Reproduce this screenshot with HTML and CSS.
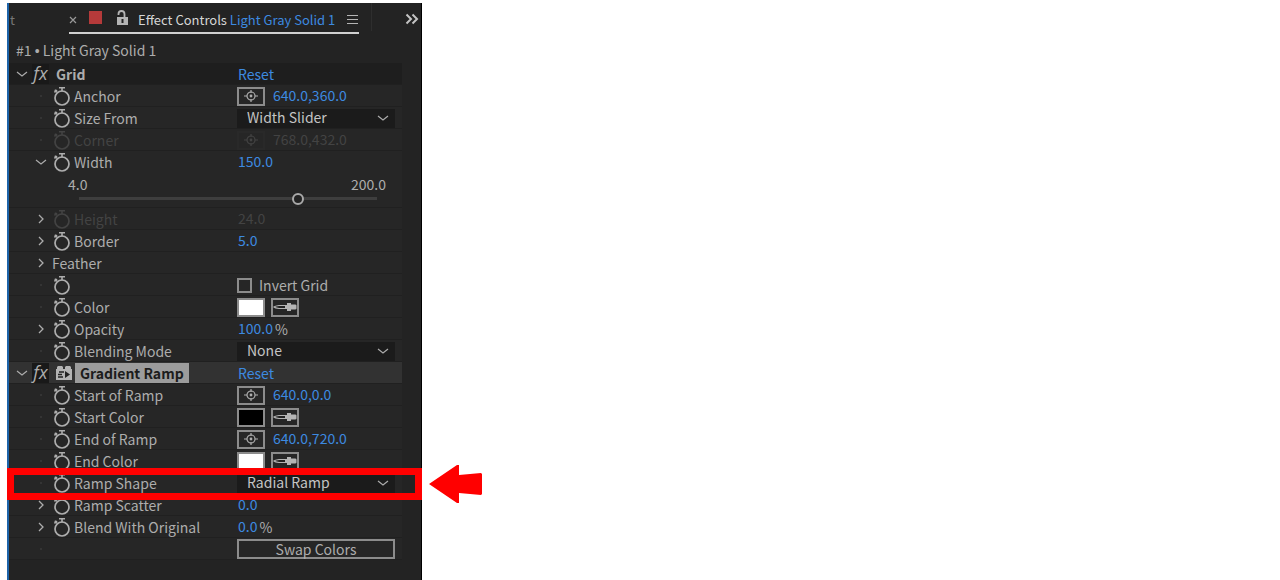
FILE: index.html
```
<!DOCTYPE html>
<html lang="en">
<head>
<meta charset="UTF-8">
<meta name="viewport" content="width=device-width, initial-scale=1.0">
<title>Effect Controls</title>
<link rel="stylesheet" href="styles.css">
</head>
<body>

<!-- shared icons -->
<svg class="sprite" aria-hidden="true">
  <symbol id="watch" viewBox="0 0 18 20">
    <circle cx="9" cy="12" r="7" fill="none" stroke="currentColor" stroke-width="1.7"/>
    <path d="M6 1.8h6M9 2v3.5M1.800 3.800l2.400 2.400M1.400 6.400l2.600-2.200" fill="none" stroke="currentColor" stroke-width="1.6"/>
  </symbol>
  <symbol id="down" viewBox="0 0 12 12">
    <path d="M1 4l5 4 5-4" fill="none" stroke="currentColor" stroke-width="1.2"/>
  </symbol>
  <symbol id="right" viewBox="0 0 12 12">
    <path d="M4 2l4 4-4 4" fill="none" stroke="currentColor" stroke-width="1.3"/>
  </symbol>
  <symbol id="target" viewBox="0 0 16 14">
    <circle cx="8" cy="7" r="4" fill="none" stroke="currentColor" stroke-width="1.2"/>
    <circle cx="8" cy="7" r="1.4" fill="currentColor"/>
    <path d="M1 7h3M12 7h3M8 1v3M8 10v3" stroke="currentColor" stroke-width="1.2"/>
  </symbol>
  <symbol id="dropper" viewBox="0 0 24 10">
    <path d="M14 3.500H6Q2 4 1 5q1 1 5 1.500h8" fill="#222" stroke="#b4b4b4" stroke-width="1.200"/>
    <path d="M12 3.500h2V1h4v1.500h4q1.500 0 1.500 1v3q0 1-1.500 1h-4V9h-4V6.500h-2z" fill="#b4b4b4"/>
  </symbol>
</svg>

<main class="panel">
  <div class="tabs">
    <span class="tab-prev">t</span>
    <div class="tab">
      <button class="icon-btn close" aria-label="Close tab">
        <svg width="8" height="8" viewBox="0 0 8 8"><path d="M1 1l6 6M7 1L1 7" stroke="#999" stroke-width="1.200"/></svg>
      </button>
      <span class="label-color"></span>
      <button class="icon-btn" aria-label="Lock">
        <svg width="14" height="16" viewBox="0 0 14 16"><path d="M3.500 5V4a3 3 0 0 1 6 0v4" fill="none" stroke="#b4b4b4" stroke-width="1.800"/><path d="M2 7h11v8H2z" fill="#b4b4b4"/><path d="M6.500 9h2v4h-2z" fill="#222"/></svg>
      </button>
      <span class="tab-title">Effect Controls <span class="blue">Light Gray Solid 1</span></span>
      <button class="icon-btn menu" aria-label="Panel menu">
        <svg width="12" height="12" viewBox="0 0 12 12"><path d="M0 1.500h11M0 5.500h11M0 9.500h11" stroke="#b4b4b4" stroke-width="1.200"/></svg>
      </button>
    </div>
    <div class="divider"></div>
    <button class="icon-btn more" aria-label="More tabs">
      <svg width="14" height="12" viewBox="0 0 14 12"><path d="M1.500 1.500L6 6l-4.500 4.500M7.500 1.500L12 6l-4.500 4.500" fill="none" stroke="#c4c4c4" stroke-width="2"/></svg>
    </button>
  </div>

  <div class="source">#1 <span class="bullet">•</span> Light Gray Solid 1</div>

  <section class="effect">
    <div class="row head">
      <div class="name">
        <svg class="twist"><use href="#down"/></svg>
        <span class="fx">fx</span>
        <h2>Grid</h2>
      </div>
      <div class="value"><button class="link">Reset</button></div>
    </div>
    <div class="row">
      <div class="name prop"><span class="dot"></span><svg class="watch"><use href="#watch"/></svg>Anchor</div>
      <div class="value"><button class="box-btn" aria-label="Pick anchor"><svg width="16" height="14"><use href="#target"/></svg></button><span class="num">640.0,360.0</span></div>
    </div>
    <div class="row">
      <div class="name prop"><span class="dot"></span><svg class="watch"><use href="#watch"/></svg><label for="size">Size From</label></div>
      <div class="value"><div class="drop"><select id="size"><option>Width Slider</option></select><svg class="arrow"><use href="#down"/></svg></div></div>
    </div>
    <div class="row off">
      <div class="name prop"><span class="dot"></span><svg class="watch"><use href="#watch"/></svg>Corner</div>
      <div class="value"><button class="box-btn" disabled aria-label="Pick corner"><svg width="16" height="14"><use href="#target"/></svg></button><span class="num">768.0,432.0</span></div>
    </div>
    <div class="row open">
      <div class="name prop"><svg class="twist"><use href="#down"/></svg><svg class="watch"><use href="#watch"/></svg><label for="width">Width</label></div>
      <div class="value"><span class="num">150.0</span></div>
      <div class="slider">
        <div class="range"><span>4.0</span><span>200.0</span></div>
        <input type="range" id="width" min="4" max="200" value="150">
      </div>
    </div>
    <div class="row off">
      <div class="name prop"><svg class="twist"><use href="#right"/></svg><svg class="watch"><use href="#watch"/></svg>Height</div>
      <div class="value"><span class="num">24.0</span></div>
    </div>
    <div class="row">
      <div class="name prop"><svg class="twist"><use href="#right"/></svg><svg class="watch"><use href="#watch"/></svg>Border</div>
      <div class="value"><span class="num">5.0</span></div>
    </div>
    <div class="row">
      <div class="name prop"><svg class="twist"><use href="#right"/></svg>Feather</div>
    </div>
    <div class="row">
      <div class="name prop"><span class="dot"></span><svg class="watch"><use href="#watch"/></svg></div>
      <div class="value"><input type="checkbox" id="invert"><label class="check-label" for="invert">Invert Grid</label></div>
    </div>
    <div class="row">
      <div class="name prop"><span class="dot"></span><svg class="watch"><use href="#watch"/></svg><label for="color">Color</label></div>
      <div class="value"><input type="color" id="color" value="#ffffff"><button class="box-btn" aria-label="Eyedropper"><svg width="24" height="10"><use href="#dropper"/></svg></button></div>
    </div>
    <div class="row">
      <div class="name prop"><svg class="twist"><use href="#right"/></svg><svg class="watch"><use href="#watch"/></svg>Opacity</div>
      <div class="value"><span class="num">100.0</span><span class="unit">%</span></div>
    </div>
    <div class="row">
      <div class="name prop"><span class="dot"></span><svg class="watch"><use href="#watch"/></svg><label for="blend">Blending Mode</label></div>
      <div class="value"><div class="drop"><select id="blend"><option>None</option></select><svg class="arrow"><use href="#down"/></svg></div></div>
    </div>
  </section>

  <section class="effect">
    <div class="row head selected">
      <div class="name">
        <svg class="twist"><use href="#down"/></svg>
        <span class="fx">fx</span>
        <svg class="plug" width="16" height="16" viewBox="0 0 16 16"><path d="M0 4h1V2l1-1h4l1 1v2h2V2l1-1h4l1 1v2h1v11H0z" fill="#b4b4b4"/><path d="M3 7h5M2 9.500h4M2 12h5" stroke="#222" stroke-width="1.300"/><path d="M9 6l5 3.500L9 13z" fill="#222"/></svg>
        <h2>Gradient Ramp</h2>
      </div>
      <div class="value"><button class="link">Reset</button></div>
    </div>
    <div class="row">
      <div class="name prop"><span class="dot"></span><svg class="watch"><use href="#watch"/></svg>Start of Ramp</div>
      <div class="value"><button class="box-btn" aria-label="Pick start"><svg width="16" height="14"><use href="#target"/></svg></button><span class="num">640.0,0.0</span></div>
    </div>
    <div class="row">
      <div class="name prop"><span class="dot"></span><svg class="watch"><use href="#watch"/></svg><label for="start">Start Color</label></div>
      <div class="value"><input type="color" id="start" value="#000000"><button class="box-btn" aria-label="Eyedropper"><svg width="24" height="10"><use href="#dropper"/></svg></button></div>
    </div>
    <div class="row">
      <div class="name prop"><span class="dot"></span><svg class="watch"><use href="#watch"/></svg>End of Ramp</div>
      <div class="value"><button class="box-btn" aria-label="Pick end"><svg width="16" height="14"><use href="#target"/></svg></button><span class="num">640.0,720.0</span></div>
    </div>
    <div class="row">
      <div class="name prop"><span class="dot"></span><svg class="watch"><use href="#watch"/></svg><label for="end">End Color</label></div>
      <div class="value"><input type="color" id="end" value="#ffffff"><button class="box-btn" aria-label="Eyedropper"><svg width="24" height="10"><use href="#dropper"/></svg></button></div>
    </div>
    <div class="row">
      <div class="name prop"><span class="dot"></span><svg class="watch"><use href="#watch"/></svg><label for="shape">Ramp Shape</label></div>
      <div class="value"><div class="drop"><select id="shape"><option>Radial Ramp</option></select><svg class="arrow"><use href="#down"/></svg></div></div>
      <div class="marker"></div>
      <svg class="pointer" width="54" height="38" viewBox="0 0 54 38"><path d="M0 19L28 0h2v10l22-2 1 1v20l-1 1-22-2v10h-2z" fill="#f00"/></svg>
    </div>
    <div class="row">
      <div class="name prop"><svg class="twist"><use href="#right"/></svg><svg class="watch"><use href="#watch"/></svg>Ramp Scatter</div>
      <div class="value"><span class="num">0.0</span></div>
    </div>
    <div class="row">
      <div class="name prop"><svg class="twist"><use href="#right"/></svg><svg class="watch"><use href="#watch"/></svg>Blend With Original</div>
      <div class="value"><span class="num">0.0</span><span class="unit">%</span></div>
    </div>
    <div class="row">
      <div class="name prop"><span class="dot"></span></div>
      <div class="value"><button class="swap">Swap Colors</button></div>
    </div>
  </section>
</main>

</body>
</html>
```
FILE: styles.css
```
* {
  box-sizing: border-box;
}
body {
  margin: 0;
  padding: 3px 7px 0;
  min-height: 100vh;
  display: flex;
  background-color: white;
  font-family: "Noto Sans CJK SC", "Open Sans", sans-serif;
  font-size: 14px;
  line-height: 20px;
  color: #adadad;
}
button, select, input {
  font: inherit;
  color: inherit;
  margin: 0;
  padding: 0;
  border: none;
  background: none;
}
.sprite {
  position: absolute;
  width: 0;
  height: 0;
}
svg {
  flex: none;
}
.panel {
  width: 415px;
  background-color: #232323;
  border-left: 2px solid #1d63a8;
  border-right: 1px solid black;
}

/* Tab bar */
.tabs {
  display: flex;
  height: 36px;
  font-size: 13px;
}
.tab-prev {
  width: 60px;
  padding: 7px 1px;
  color: #777;
}
.tab {
  display: flex;
  align-items: center;
  width: 290px;
  height: 31px;
  border-bottom: 2px solid #d0d0d0;
}
.close {
  padding-top: 4px;
  margin-right: 12px;
}
.label-color {
  width: 13px;
  height: 13px;
  margin-right: 13px;
  background-color: #b53a3a;
}
.icon-btn {
  display: flex;
}
.tab-title {
  margin-left: 9px;
  padding-top: 4px;
  color: #d6d6d6;
  white-space: nowrap;
}
.blue {
  color: #3d8ae0;
}
.menu {
  margin-left: auto;
  padding-top: 4px;
}
.divider {
  width: 1px;
  height: 28px;
  margin-left: 12px;
  background-color: #2e2e2e;
}
.more {
  margin-left: auto;
  padding: 10px 2px;
  height: 32px;
}
.source {
  height: 24px;
  padding: 1px 7px;
}
.bullet {
  font-family: "Liberation Sans", sans-serif;
}

/* Effect rows */
.row {
  position: relative;
  display: grid;
  grid-template-columns: 228px 158px;
  height: 22px;
  width: 393px;
  background-color: #262626;
  border-bottom: 1px solid #202020;
}
.name, .value {
  display: flex;
  align-items: center;
  height: 22px;
  white-space: nowrap;
}
.head {
  background-color: #1e1e1e;
}
.selected {
  background-color: #323232;
}
.head .name {
  padding-left: 7px;
}
h2 {
  margin: 0 0 0 7px;
  font-size: 14px;
  line-height: 20px;
}
.selected h2 {
  margin-left: 3px;
  padding: 0 5px;
  background-color: #9c9c9c;
  color: #1c1c1c;
}
.twist {
  width: 12px;
  height: 12px;
}
.fx {
  width: 17px;
  height: 20px;
  margin-left: 4px;
  background-color: #191919;
  font-family: "Open Sans", sans-serif;
  font-style: italic;
  font-size: 18px;
  line-height: 18px;
  text-align: center;
}
.plug {
  margin-left: 7px;
}
.prop {
  padding-left: 26px;
}
.dot {
  width: 2px;
  height: 2px;
  margin: 0 5px;
  background-color: #343434;
}
.prop .twist {
  margin-right: 5px;
}
.prop .watch {
  width: 18px;
  height: 20px;
  margin-right: 3px;
}
.dot + .watch {
  margin-left: 6px;
}
.twist + .watch {
  margin-left: 1px;
}
.off {
  color: #434343;
}
.off .twist {
  color: #a9a9a9;
}

/* Values */
.link, .num {
  color: #3d8ae0;
}
.num {
  padding-bottom: 2px;
}
.off .num {
  color: #434343;
}
.link, .value > .num:first-child {
  margin-left: 1px;
}
.box-btn {
  display: flex;
  align-items: center;
  justify-content: center;
  width: 28px;
  height: 19px;
  margin-right: 8px;
  border: 2px solid #8c8c8c;
}
.off .box-btn {
  border-color: #292929;
}
input[type="color"] {
  appearance: none;
  width: 28px;
  height: 19px;
  margin-right: 6px;
  border: 2px solid #8c8c8c;
}
input::-webkit-color-swatch-wrapper {
  padding: 0;
}
input::-webkit-color-swatch {
  border: none;
  border-radius: 0;
}
input[type="checkbox"] {
  appearance: none;
  width: 15px;
  height: 15px;
  border: 2px solid #8c8c8c;
}
.check-label {
  margin-left: 7px;
}
.unit {
  margin-left: 2px;
}
.drop {
  position: relative;
  width: 100%;
}
.drop select {
  appearance: none;
  display: block;
  width: 100%;
  height: 19px;
  padding: 0 0 2px 10px;
  line-height: 17px;
  background-color: #1b1b1b;
  color: #c4c4c4;
}
.arrow {
  position: absolute;
  top: 3px;
  right: 6px;
  width: 12px;
  height: 12px;
}
.swap {
  width: 100%;
  height: 20px;
  line-height: 16px;
  border: 2px solid #8c8c8c;
}

/* Width slider */
.open {
  height: 57px;
}
.slider {
  grid-column: 1 / 3;
}
.range {
  display: flex;
  justify-content: space-between;
  padding: 0 9px 0 59px;
  line-height: 17px;
}
input[type="range"] {
  appearance: none;
  display: block;
  width: 298px;
  height: 12px;
  margin-left: 70px;
}
input::-webkit-slider-runnable-track {
  height: 3px;
  background-color: #3e3e3e;
}
input::-webkit-slider-thumb {
  appearance: none;
  width: 12px;
  height: 12px;
  margin-top: -4px;
  border: 2px solid #a9a9a9;
  border-radius: 50%;
  background-color: #232323;
}

/* Red callout over the ramp shape row */
.marker {
  position: absolute;
  top: -4px;
  left: -2px;
  width: 415px;
  height: 32px;
  border: 7px solid #f00;
  z-index: 1;
}
.pointer {
  position: absolute;
  top: -7px;
  left: 420px;
}
```
